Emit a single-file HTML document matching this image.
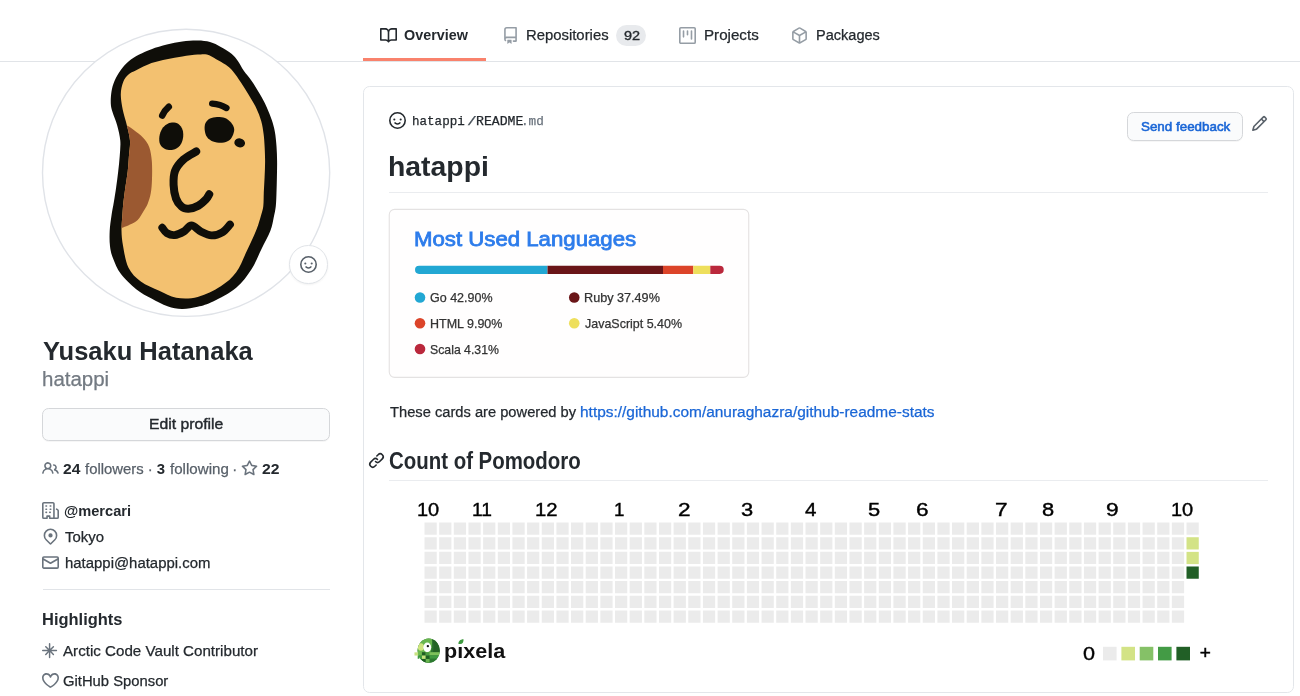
<!DOCTYPE html>
<html lang="en">
<head>
<meta charset="utf-8">
<title>hatappi (Yusaku Hatanaka)</title>
<style>
html,body{margin:0;padding:0}
body{width:1300px;height:696px;position:relative;overflow:hidden;background:#fff;font-family:"Liberation Sans",sans-serif;color:#24292e;-webkit-font-smoothing:antialiased}
.t{position:absolute;white-space:nowrap;margin:0;padding:0;font-weight:normal;text-decoration:none;color:#24292e;transform-origin:0 50%;display:block}
.i{position:absolute;display:block;overflow:visible}
#page{position:absolute;left:0;top:0;width:1300px;height:696px;will-change:transform}
.b{position:absolute;box-sizing:border-box}
#navline{left:0;top:60.5px;width:1300px;height:1.2px;background:#e1e4e8}
#tabsel{left:363.1px;top:58.3px;width:122.7px;height:2.9px;background:#f9826c}
#counter{left:616.4px;top:25.4px;width:30px;height:20.8px;border-radius:11px;background:#e8eaed}
#readme{left:363.2px;top:86.4px;width:930.5px;height:607px;border:1.4px solid #e3e6ea;border-radius:6.6px}
#fb{left:1127.3px;top:112.3px;width:116.2px;height:28.6px;border:1.1px solid #d5d7da;border-radius:6.6px;background:#fafbfc;box-shadow:0 1px 0 rgba(27,31,35,.04)}
#h1line{left:389.2px;top:191.6px;width:878.8px;height:1.1px;background:#eaecef}
#h2line{left:389.2px;top:480.4px;width:878.8px;height:1.1px;background:#eaecef}
#edit{left:42.3px;top:407.8px;width:287.9px;height:32.9px;border:1.1px solid #d5d7da;border-radius:6.6px;background:#fafbfc;box-shadow:0 1px 0 rgba(27,31,35,.04)}
#sideline{left:42.5px;top:588.7px;width:287.5px;height:1.1px;background:#e1e4e8}
#avatar{left:30px;top:20px;width:320px;height:320px}
#emoji{left:289.3px;top:245.3px;width:38.6px;height:38.6px;border-radius:50%;background:#fff;border:1.1px solid #e1e4e8;box-shadow:0 1px 2px rgba(27,31,35,.06)}
#card{left:385px;top:205px;width:370px;height:180px}
#grid{left:410px;top:518px;width:800px;height:150px}
#logo{left:405px;top:630px;width:110px;height:40px}
</style>
</head>
<body>
<div id="page">
<nav>
<div class="b" id="navline"></div>
<div class="b" id="tabsel"></div>
<div class="b" id="counter"></div>
<svg class="i" style="left:379.5px;top:26.52px;width:17px;height:17px;fill:#24292e" viewBox="0 0 16 16"><path fill-rule="evenodd" d="M0 1.75A.75.75 0 01.75 1h4.253c1.227 0 2.317.59 3 1.501A3.744 3.744 0 0111.006 1h4.245a.75.75 0 01.75.75v10.5a.75.75 0 01-.75.75h-4.507a2.25 2.25 0 00-1.591.659l-.622.621a.75.75 0 01-1.06 0l-.622-.621A2.25 2.25 0 005.258 13H.75a.75.75 0 01-.75-.75V1.75zm8.755 3a2.25 2.25 0 012.25-2.25H14.5v9h-3.757c-.71 0-1.4.201-1.992.572l.004-7.322zm-1.504 7.324l.004-5.073-.002-2.253A2.25 2.25 0 005.003 2.5H1.5v9h3.757a3.75 3.75 0 011.994.574z"/></svg>
<svg class="i" style="left:501.88px;top:26.88px;width:17px;height:17px;fill:#959da5" viewBox="0 0 16 16"><path fill-rule="evenodd" d="M2 2.5A2.5 2.5 0 014.5 0h8.75a.75.75 0 01.75.75v12.5a.75.75 0 01-.75.75h-2.5a.75.75 0 110-1.5h1.75v-2h-8a1 1 0 00-.714 1.7.75.75 0 01-1.072 1.05A2.495 2.495 0 012 11.5v-9zm10.5-1V9h-8c-.356 0-.694.074-1 .208V2.5a1 1 0 011-1h8zM5 12.25v3.25a.25.25 0 00.4.2l1.45-1.087a.25.25 0 01.3 0L8.6 15.7a.25.25 0 00.4-.2v-3.25a.25.25 0 00-.25-.25h-3.5a.25.25 0 00-.25.25z"/></svg>
<svg class="i" style="left:679px;top:26.5px;width:17px;height:17px;fill:#959da5" viewBox="0 0 16 16"><path fill-rule="evenodd" d="M1.75 0A1.75 1.75 0 000 1.75v12.5C0 15.216.784 16 1.75 16h12.5A1.75 1.75 0 0016 14.25V1.75A1.75 1.75 0 0014.25 0H1.75zM1.5 1.75a.25.25 0 01.25-.25h12.5a.25.25 0 01.25.25v12.5a.25.25 0 01-.25.25H1.75a.25.25 0 01-.25-.25V1.75zM11.75 3a.75.75 0 00-.75.75v7.5a.75.75 0 001.5 0v-7.5a.75.75 0 00-.75-.75zm-8.25.75a.75.75 0 011.5 0v5.5a.75.75 0 01-1.5 0v-5.5zM8 3a.75.75 0 00-.75.75v3.5a.75.75 0 001.5 0v-3.5A.75.75 0 008 3z"/></svg>
<svg class="i" style="left:791.25px;top:26.5px;width:17px;height:17px;fill:#959da5" viewBox="0 0 16 16"><path fill-rule="evenodd" d="M8.878.392a1.75 1.75 0 00-1.756 0l-5.25 3.045A1.75 1.75 0 001 4.951v6.098c0 .624.332 1.2.872 1.514l5.25 3.045a1.75 1.75 0 001.756 0l5.25-3.045c.54-.313.872-.89.872-1.514V4.951c0-.624-.332-1.2-.872-1.514L8.878.392zM7.875 1.69a.25.25 0 01.25 0l4.63 2.685L8 7.133 3.245 4.375l4.63-2.685zM2.5 5.677v5.372c0 .09.047.171.125.216l4.625 2.683V8.432L2.5 5.677zm6.25 8.271l4.625-2.683a.25.25 0 00.125-.216V5.677L8.75 8.432v5.516z"/></svg>
<span class="t" style="left:404.05px;top:26.02px;font-size:14.9px;line-height:18px;font-weight:bold;transform:scaleX(0.9643)">Overview</span>
<span class="t" style="left:525.84px;top:26.02px;font-size:14.9px;line-height:18px;transform:scaleX(0.9977);-webkit-text-stroke:0.25px">Repositories</span>
<span class="t" style="left:623.88px;top:28.02px;font-size:12.75px;line-height:16px;transform:scaleX(1.1354);-webkit-text-stroke:0.35px">92</span>
<span class="t" style="left:704.22px;top:26.02px;font-size:14.9px;line-height:18px;transform:scaleX(1.0174);-webkit-text-stroke:0.25px">Projects</span>
<span class="t" style="left:816.26px;top:26.02px;font-size:14.9px;line-height:18px;transform:scaleX(0.9764);-webkit-text-stroke:0.25px">Packages</span>
</nav>
<aside>
<svg class="i" id="avatar" viewBox="30 20 320 320">
<circle cx="186.1" cy="172.8" r="143.6" fill="#fff" stroke="#e0e3e8" stroke-width="1.4"/>
<path d="M110.8 103.8C110.63 100.38 110.87 95.33 111.5 91.5C112.13 87.67 113.05 84.38 114.6 80.8C116.15 77.22 118.48 73.22 120.8 70C123.12 66.78 125.43 64.07 128.5 61.5C131.57 58.93 135.37 56.65 139.2 54.6C143.03 52.55 146.88 50.87 151.5 49.2C156.12 47.53 161.77 45.88 166.9 44.6C172.03 43.32 177.17 42.18 182.3 41.5C187.43 40.82 193.08 40.42 197.7 40.5C202.32 40.58 206.15 40.93 210 42C213.85 43.07 217.22 44.93 220.8 46.9C224.38 48.87 228.68 51.48 231.5 53.8C234.32 56.12 235.65 57.97 237.7 60.8C239.75 63.63 241.5 67.47 243.8 70.8C246.1 74.13 248.93 77.08 251.5 80.8C254.07 84.52 256.68 88.75 259.2 93.1C261.72 97.45 264.5 102.42 266.6 106.9C268.7 111.38 270.42 115.82 271.8 120C273.18 124.18 274.12 127.63 274.9 132C275.68 136.37 276.13 141.28 276.5 146.2C276.87 151.12 277.03 156.38 277.1 161.5C277.17 166.62 277 171.77 276.9 176.9C276.8 182.03 276.68 187.42 276.5 192.3C276.32 197.18 276.25 202.08 275.8 206.2C275.35 210.32 274.7 212.9 273.8 217C272.9 221.1 272.47 225.43 270.4 230.8C268.33 236.17 264.55 242.8 261.4 249.2C258.25 255.6 255.7 262.78 251.5 269.2C247.3 275.62 242.6 282.32 236.2 287.7C229.8 293.08 219.52 298.32 213.1 301.5C206.68 304.68 202.88 305.55 197.7 306.8C192.52 308.05 187.03 309.1 182 309C176.97 308.9 172.58 307.95 167.5 306.2C162.42 304.45 156.72 301.33 151.5 298.5C146.28 295.67 141.32 293.32 136.2 289.2C131.08 285.08 124.65 278.92 120.8 273.8C116.95 268.68 114.9 263.1 113.1 258.5C111.3 253.9 110.57 250.82 110 246.2C109.43 241.58 109.45 235.93 109.7 230.8C109.95 225.67 110.82 220.15 111.5 215.4C112.18 210.65 113.02 207.05 113.8 202.3C114.58 197.55 115.47 192.03 116.2 186.9C116.93 181.77 117.62 176.62 118.2 171.5C118.78 166.38 119.35 161.32 119.7 156.2C120.05 151.08 120.72 145.93 120.3 140.8C119.88 135.67 118.5 130.2 117.2 125.4C115.9 120.6 113.57 115.6 112.5 112C111.43 108.4 110.97 107.22 110.8 103.8Z" fill="#0f0e09"/>
<path d="M120.8 94.6C120.85 89.98 121.82 85.63 123.1 82.3C124.38 78.97 126.32 76.6 128.5 74.6C130.68 72.6 132.37 72.22 136.2 70.3C140.03 68.38 146.38 64.95 151.5 63.1C156.62 61.25 161.77 60.3 166.9 59.2C172.03 58.1 177.17 57.27 182.3 56.5C187.43 55.73 193.6 54.92 197.7 54.6C201.8 54.28 203.82 53.83 206.9 54.6C209.98 55.37 213.12 57.53 216.2 59.2C219.28 60.87 222.58 62.55 225.4 64.6C228.22 66.65 230.53 68.55 233.1 71.5C235.67 74.45 238.23 78.45 240.8 82.3C243.37 86.15 245.93 90.32 248.5 94.6C251.07 98.88 254.08 103.6 256.2 108C258.32 112.4 259.97 116.67 261.2 121C262.43 125.33 263.03 129.8 263.6 134C264.17 138.2 264.35 141.62 264.6 146.2C264.85 150.78 265.1 156.38 265.1 161.5C265.1 166.62 264.82 171.77 264.6 176.9C264.38 182.03 264.02 187.42 263.8 192.3C263.58 197.18 263.77 202.35 263.3 206.2C262.83 210.05 262.12 211.57 261 215.4C259.88 219.23 258.95 223.3 256.6 229.2C254.25 235.1 250.3 243.62 246.9 250.8C243.5 257.98 240.55 266.4 236.2 272.3C231.85 278.2 227.22 282.1 220.8 286.2C214.38 290.3 205.13 294.98 197.7 296.9C190.27 298.82 182.62 298.72 176.2 297.7C169.78 296.68 165.1 293.5 159.2 290.8C153.3 288.1 145.92 285.35 140.8 281.5C135.68 277.65 131.45 273.58 128.5 267.7C125.55 261.82 124.27 252.35 123.1 246.2C121.93 240.05 121.63 235.8 121.5 230.8C121.37 225.8 121.98 220.95 122.3 216.2C122.62 211.45 122.88 207.18 123.4 202.3C123.92 197.42 124.68 192.03 125.4 186.9C126.12 181.77 127.12 176.62 127.7 171.5C128.28 166.38 128.52 161.32 128.9 156.2C129.28 151.08 130.33 145.93 130 140.8C129.67 135.67 128.1 130.53 126.9 125.4C125.7 120.27 123.82 115.13 122.8 110C121.78 104.87 120.75 99.22 120.8 94.6Z" fill="#f3c170"/>
<clipPath id="beanclip"><path d="M120.8 94.6C120.85 89.98 121.82 85.63 123.1 82.3C124.38 78.97 126.32 76.6 128.5 74.6C130.68 72.6 132.37 72.22 136.2 70.3C140.03 68.38 146.38 64.95 151.5 63.1C156.62 61.25 161.77 60.3 166.9 59.2C172.03 58.1 177.17 57.27 182.3 56.5C187.43 55.73 193.6 54.92 197.7 54.6C201.8 54.28 203.82 53.83 206.9 54.6C209.98 55.37 213.12 57.53 216.2 59.2C219.28 60.87 222.58 62.55 225.4 64.6C228.22 66.65 230.53 68.55 233.1 71.5C235.67 74.45 238.23 78.45 240.8 82.3C243.37 86.15 245.93 90.32 248.5 94.6C251.07 98.88 254.08 103.6 256.2 108C258.32 112.4 259.97 116.67 261.2 121C262.43 125.33 263.03 129.8 263.6 134C264.17 138.2 264.35 141.62 264.6 146.2C264.85 150.78 265.1 156.38 265.1 161.5C265.1 166.62 264.82 171.77 264.6 176.9C264.38 182.03 264.02 187.42 263.8 192.3C263.58 197.18 263.77 202.35 263.3 206.2C262.83 210.05 262.12 211.57 261 215.4C259.88 219.23 258.95 223.3 256.6 229.2C254.25 235.1 250.3 243.62 246.9 250.8C243.5 257.98 240.55 266.4 236.2 272.3C231.85 278.2 227.22 282.1 220.8 286.2C214.38 290.3 205.13 294.98 197.7 296.9C190.27 298.82 182.62 298.72 176.2 297.7C169.78 296.68 165.1 293.5 159.2 290.8C153.3 288.1 145.92 285.35 140.8 281.5C135.68 277.65 131.45 273.58 128.5 267.7C125.55 261.82 124.27 252.35 123.1 246.2C121.93 240.05 121.63 235.8 121.5 230.8C121.37 225.8 121.98 220.95 122.3 216.2C122.62 211.45 122.88 207.18 123.4 202.3C123.92 197.42 124.68 192.03 125.4 186.9C126.12 181.77 127.12 176.62 127.7 171.5C128.28 166.38 128.52 161.32 128.9 156.2C129.28 151.08 130.33 145.93 130 140.8C129.67 135.67 128.1 130.53 126.9 125.4C125.7 120.27 123.82 115.13 122.8 110C121.78 104.87 120.75 99.22 120.8 94.6Z"/></clipPath>
<path d="M126.9 125.4C128.7 126.07 131.1 127.95 133.8 130C136.5 132.05 140.53 134.88 143.1 137.7C145.67 140.52 147.75 143.05 149.2 146.9C150.65 150.75 151.33 155.42 151.8 160.8C152.27 166.18 152.17 173.82 152 179.2C151.83 184.58 151.52 189 150.8 193.1C150.08 197.2 148.87 200.85 147.7 203.8C146.53 206.75 145.47 208.1 143.8 210.8C142.13 213.5 140 217.7 137.7 220C135.4 222.3 132.43 223.37 130 224.6C127.57 225.83 125.1 227 123.1 227.4C121.1 227.8 118.85 228.87 118 227C117.15 225.13 117.67 220.32 118 216.2C118.33 212.08 119.33 207.18 120 202.3C120.67 197.42 121.33 192.03 122 186.9C122.67 181.77 123.5 176.62 124 171.5C124.5 166.38 124.67 161.32 125 156.2C125.33 151.08 126.33 145.83 126 140.8C125.67 135.77 122.85 128.57 123 126C123.15 123.43 125.1 124.73 126.9 125.4Z" fill="#9b5931" clip-path="url(#beanclip)"/>
<g fill="none" stroke="#0f0e09" stroke-linecap="round" stroke-linejoin="round">
<path d="M162.2 115.6Q164.4 110.6 168.8 106.8" stroke-width="6.5"/>
<path d="M212.2 103.6Q220.5 104.2 226.4 108" stroke-width="6.4"/>
<path d="M196.2 151.5C194.08 152.83 187.03 156.25 183.5 159.5C179.97 162.75 176.65 166.75 175 171C173.35 175.25 173.43 180.42 173.6 185C173.77 189.58 174.68 194.92 176 198.5C177.32 202.08 179.42 204.78 181.5 206.5C183.58 208.22 185.67 208.95 188.5 208.8C191.33 208.65 195.62 207.13 198.5 205.6C201.38 204.07 204.02 201.48 205.8 199.6C207.58 197.72 208.63 195.18 209.2 194.3" stroke-width="8"/>
<path d="M162.3 227.7C163.07 228.6 164.85 231.87 166.9 233.1C168.95 234.33 171.78 235.37 174.6 235.1C177.42 234.83 180.98 233.12 183.8 231.5C186.62 229.88 188.67 225.4 191.5 225.4C194.33 225.4 197.47 229.83 200.8 231.5C204.13 233.17 207.92 235.27 211.5 235.4C215.08 235.53 219.22 234.1 222.3 232.3C225.38 230.5 228.72 225.88 230 224.6" stroke-width="7.8"/>
</g>
<g fill="#0f0e09">
<path d="M172 122.6C174 122.52 176.73 122.77 178.5 124C180.27 125.23 181.85 127.67 182.6 130C183.35 132.33 183.43 135.42 183 138C182.57 140.58 181.67 143.53 180 145.5C178.33 147.47 175.5 149.22 173 149.8C170.5 150.38 167.17 149.97 165 149C162.83 148.03 160.93 146.08 160 144C159.07 141.92 159.07 139 159.4 136.5C159.73 134 160.82 131 162 129C163.18 127 164.83 125.57 166.5 124.5C168.17 123.43 170 122.68 172 122.6Z"/>
<path d="M217 116.9C219.5 116.82 222.67 117.07 225 118C227.33 118.93 229.47 120.67 231 122.5C232.53 124.33 233.95 126.75 234.2 129C234.45 131.25 233.37 134.08 232.5 136C231.63 137.92 230.75 139.37 229 140.5C227.25 141.63 224.67 142.63 222 142.8C219.33 142.97 215.5 142.47 213 141.5C210.5 140.53 208.38 138.92 207 137C205.62 135.08 204.95 132.33 204.7 130C204.45 127.67 204.62 124.92 205.5 123C206.38 121.08 208.08 119.52 210 118.5C211.92 117.48 214.5 116.98 217 116.9Z"/>
<ellipse cx="239.7" cy="142.9" rx="5.4" ry="4.5" transform="rotate(10 239.7 142.9)"/>
</g>
</svg>
<div class="b" id="emoji"></div>
<div class="b" id="edit"></div>
<div class="b" id="sideline"></div>
<svg class="i" style="left:42.07px;top:460.23px;width:17px;height:17px;fill:#6a737d" viewBox="0 0 16 16"><path fill-rule="evenodd" d="M5.5 3.5a2 2 0 100 4 2 2 0 000-4zM2 5.5a3.5 3.5 0 115.898 2.549 5.507 5.507 0 013.034 4.084.75.75 0 11-1.482.235 4.001 4.001 0 00-7.9 0 .75.75 0 01-1.482-.236A5.507 5.507 0 013.102 8.05 3.49 3.49 0 012 5.5zM11 4a.75.75 0 100 1.5 1.5 1.5 0 01.666 2.844.75.75 0 00-.416.672v.352a.75.75 0 00.574.73c1.2.289 2.162 1.2 2.522 2.372a.75.75 0 101.434-.44 5.01 5.01 0 00-2.56-3.012A3 3 0 0011 4z"/></svg>
<svg class="i" style="left:240.7px;top:460.21px;width:17px;height:17px;fill:#6a737d" viewBox="0 0 16 16"><path fill-rule="evenodd" d="M8 .25a.75.75 0 01.673.418l1.882 3.815 4.21.612a.75.75 0 01.416 1.279l-3.046 2.97.719 4.192a.75.75 0 01-1.088.791L8 12.347l-3.766 1.98a.75.75 0 01-1.088-.79l.72-4.194L.818 6.374a.75.75 0 01.416-1.28l4.21-.611L7.327.668A.75.75 0 018 .25zm0 2.445L6.615 5.5a.75.75 0 01-.564.41l-3.097.45 2.24 2.184a.75.75 0 01.216.664l-.528 3.084 2.769-1.456a.75.75 0 01.698 0l2.77 1.456-.53-3.084a.75.75 0 01.216-.664l2.24-2.183-3.096-.45a.75.75 0 01-.564-.41L8 2.694v.001z"/></svg>
<svg class="i" style="left:42.12px;top:502.12px;width:17px;height:17px;fill:#6a737d" viewBox="0 0 16 16"><path fill-rule="evenodd" d="M1.5 14.25c0 .138.112.25.25.25H4v-1.25a.75.75 0 01.75-.75h2.5a.75.75 0 01.75.75v1.25h2.25a.25.25 0 00.25-.25V1.75a.25.25 0 00-.25-.25h-8.5a.25.25 0 00-.25.25v12.5zM1.75 16A1.75 1.75 0 010 14.25V1.75C0 .784.784 0 1.75 0h8.5C11.216 0 12 .784 12 1.75v12.5c0 .085-.006.168-.018.25h2.268a.25.25 0 00.25-.25V8.285a.25.25 0 00-.111-.208l-1.055-.703a.75.75 0 11.832-1.248l1.055.703c.487.325.779.871.779 1.456v5.965A1.75 1.75 0 0114.25 16h-3.5a.75.75 0 01-.197-.026c-.099.017-.2.026-.303.026h-3a.75.75 0 01-.75-.75V14h-1v1.25a.75.75 0 01-.75.75h-3zM3 3.75A.75.75 0 013.75 3h.5a.75.75 0 010 1.5h-.5A.75.75 0 013 3.75zM3.75 6a.75.75 0 000 1.5h.5a.75.75 0 000-1.5h-.5zM3 9.75A.75.75 0 013.75 9h.5a.75.75 0 010 1.5h-.5A.75.75 0 013 9.75zM7.25 9a.75.75 0 000 1.5h.5a.75.75 0 000-1.5h-.5zM7 6.75A.75.75 0 017.75 6h.5a.75.75 0 010 1.5h-.5A.75.75 0 017 6.75zM7.75 3a.75.75 0 000 1.5h.5a.75.75 0 000-1.5h-.5z"/></svg>
<svg class="i" style="left:42.12px;top:528.34px;width:17px;height:17px;fill:#6a737d" viewBox="0 0 16 16"><path fill-rule="evenodd" d="M11.536 3.464a5 5 0 010 7.072L8 14.07l-3.536-3.535a5 5 0 117.072-7.072v.001zm1.06 8.132a6.5 6.5 0 10-9.192 0l3.535 3.536a1.5 1.5 0 002.122 0l3.535-3.536zM8 9a2 2 0 100-4 2 2 0 000 4z"/></svg>
<svg class="i" style="left:42.13px;top:553.75px;width:17px;height:17px;fill:#6a737d" viewBox="0 0 16 16"><path fill-rule="evenodd" d="M1.75 2A1.75 1.75 0 000 3.75v.736a.75.75 0 000 .027v7.737C0 13.216.784 14 1.75 14h12.5A1.75 1.75 0 0016 12.25v-8.5A1.75 1.75 0 0014.25 2H1.75zM14.5 4.07v-.32a.25.25 0 00-.25-.25H1.75a.25.25 0 00-.25.25v.32L8 7.88l6.5-3.81zm-13 1.74v6.441c0 .138.112.25.25.25h12.5a.25.25 0 00.25-.25V5.809L8.38 9.397a.75.75 0 01-.76 0L1.5 5.809z"/></svg>
<svg class="i" style="left:42.4px;top:643.1px;width:15.68px;height:15.68px;fill:#6a737d" viewBox="0 0 16 16"><path fill-rule="evenodd" d="M8.5.75a.75.75 0 00-1.5 0v5.19L4.391 3.33a.75.75 0 10-1.06 1.061L5.939 7H.75a.75.75 0 000 1.5h5.19l-2.61 2.609a.75.75 0 101.061 1.06L7 9.561v5.189a.75.75 0 001.5 0V9.56l2.609 2.61a.75.75 0 101.06-1.061L9.561 8.5h5.189a.75.75 0 000-1.5H9.56l2.61-2.609a.75.75 0 00-1.061-1.06L8.5 5.939V.75z"/></svg>
<svg class="i" style="left:42.12px;top:672.13px;width:17px;height:17px;fill:#6a737d" viewBox="0 0 16 16"><path fill-rule="evenodd" d="M4.25 2.5c-1.336 0-2.75 1.164-2.75 3 0 2.15 1.58 4.144 3.365 5.682A20.565 20.565 0 008 13.393a20.561 20.561 0 003.135-2.211C12.92 9.644 14.5 7.65 14.5 5.5c0-1.836-1.414-3-2.75-3-1.373 0-2.609.986-3.029 2.456a.75.75 0 01-1.442 0C6.859 3.486 5.623 2.5 4.25 2.5zM8 14.25l-.345.666-.002-.001-.006-.003-.018-.01a7.643 7.643 0 01-.31-.17 22.075 22.075 0 01-3.434-2.414C2.045 10.731 0 8.35 0 5.5 0 2.836 2.086 1 4.25 1 5.797 1 7.153 1.802 8 3.02 8.847 1.802 10.203 1 11.75 1 13.914 1 16 2.836 16 5.5c0 2.85-2.045 5.231-3.885 6.818a22.08 22.08 0 01-3.744 2.584l-.018.01-.006.003h-.002L8 14.25zm0 0l.345.666a.752.752 0 01-.69 0L8 14.25z"/></svg>
<svg class="i" style="left:300.1px;top:256.1px;width:17px;height:17px;fill:#586069" viewBox="0 0 16 16"><path fill-rule="evenodd" d="M1.5 8a6.5 6.5 0 1113 0 6.5 6.5 0 01-13 0zM8 0a8 8 0 100 16A8 8 0 008 0zM5 8a1 1 0 100-2 1 1 0 000 2zm7-1a1 1 0 11-2 0 1 1 0 012 0zM5.32 9.636a.75.75 0 011.038.175l.007.009c.103.118.22.222.35.31.264.178.683.37 1.285.37.602 0 1.02-.192 1.285-.371.13-.088.247-.192.35-.31l.007-.008a.75.75 0 111.222.87l-.614-.431c.614.43.614.431.613.431v.001l-.001.002-.002.003-.005.007-.014.019a1.984 1.984 0 01-.184.213c-.16.166-.338.316-.53.445-.63.418-1.37.638-2.127.629-.946 0-1.652-.308-2.126-.63a3.32 3.32 0 01-.715-.657l-.014-.02-.005-.006-.002-.003v-.002h-.001l.613-.432-.614.43a.75.75 0 01.183-1.044h.001z"/></svg>
<span class="t" style="left:42.6px;top:336.02px;font-size:25.5px;line-height:31px;font-weight:bold;transform:scaleX(0.9998)">Yusaku Hatanaka</span>
<span class="t" style="left:41.72px;top:367.02px;font-size:20px;line-height:24px;color:#737a82;transform:scaleX(1.0230);-webkit-text-stroke:0.25px">hatappi</span>
<span class="t" style="left:148.77px;top:415.02px;font-size:14.9px;line-height:18px;transform:scaleX(1.0564);-webkit-text-stroke:0.4px">Edit profile</span>
<span class="t" style="left:62.51px;top:460.02px;font-size:14.9px;line-height:18px;font-weight:bold;transform:scaleX(1.0492)">24</span>
<span class="t" style="left:85.4px;top:460.02px;font-size:14.9px;line-height:18px;color:#586069;transform:scaleX(0.9978);-webkit-text-stroke:0.25px">followers</span>
<span class="t" style="left:147.77px;top:460.02px;font-size:14.9px;line-height:18px;color:#586069;-webkit-text-stroke:0.25px">·</span>
<span class="t" style="left:156.77px;top:460.02px;font-size:14.9px;line-height:18px;font-weight:bold">3</span>
<span class="t" style="left:170px;top:460.02px;font-size:14.9px;line-height:18px;color:#586069;transform:scaleX(1.0150);-webkit-text-stroke:0.25px">following</span>
<span class="t" style="left:232.17px;top:460.02px;font-size:14.9px;line-height:18px;color:#586069;-webkit-text-stroke:0.25px">·</span>
<span class="t" style="left:261.51px;top:460.02px;font-size:14.9px;line-height:18px;font-weight:bold;transform:scaleX(1.0549)">22</span>
<span class="t" style="left:64.32px;top:502.02px;font-size:14.9px;line-height:18px;font-weight:bold;transform:scaleX(0.9806)">@mercari</span>
<span class="t" style="left:65.37px;top:528.02px;font-size:14.9px;line-height:18px;transform:scaleX(1.0017);-webkit-text-stroke:0.25px">Tokyo</span>
<span class="t" style="left:64.57px;top:554.02px;font-size:14.9px;line-height:18px;transform:scaleX(1.0019);-webkit-text-stroke:0.25px">hatappi@hatappi.com</span>
<span class="t" style="left:41.97px;top:609.02px;font-size:17px;line-height:21px;font-weight:bold;transform:scaleX(0.9681)">Highlights</span>
<span class="t" style="left:63.2px;top:642.02px;font-size:14.9px;line-height:18px;transform:scaleX(1.0171);-webkit-text-stroke:0.25px">Arctic Code Vault Contributor</span>
<span class="t" style="left:63.11px;top:672.02px;font-size:14.9px;line-height:18px;transform:scaleX(0.9939);-webkit-text-stroke:0.25px">GitHub Sponsor</span>
</aside>
<main>
<div class="b" id="readme"></div>
<div class="b" id="fb"></div>
<div class="b" id="h1line"></div>
<div class="b" id="h2line"></div>
<svg class="i" id="card" viewBox="385 205 370 180">
<rect x="389.25" y="209.4" width="359.5" height="168" rx="5.4" fill="#fffefe" stroke="#e4e2e2" stroke-width="1.1"/>
<defs><clipPath id="barclip"><rect x="415" y="265.7" width="308.75" height="8.2" rx="4.1"/></clipPath></defs>
<g clip-path="url(#barclip)">
<rect x="415" y="265" width="132.5" height="10" fill="#22a7d3"/>
<rect x="547.5" y="265" width="115.5" height="10" fill="#6a1518"/>
<rect x="663" y="265" width="30.3" height="10" fill="#dc4429"/>
<rect x="693.3" y="265" width="17" height="10" fill="#eedf5c"/>
<rect x="710.3" y="265" width="14" height="10" fill="#ba283c"/>
</g>
<circle cx="420" cy="297.5" r="5.3" fill="#22a7d3"/>
<circle cx="420" cy="323.25" r="5.3" fill="#dc4429"/>
<circle cx="420" cy="349" r="5.3" fill="#ba283c"/>
<circle cx="574.25" cy="297.5" r="5.3" fill="#6a1518"/>
<circle cx="574.25" cy="323.25" r="5.3" fill="#eedf5c"/>
</svg>
<svg class="i" id="grid" viewBox="410 518 800 150" shape-rendering="auto">
<path fill="#ebebeb" d="M424.50 522.60h12.25v12.25h-12.25zM424.50 537.23h12.25v12.25h-12.25zM424.50 551.86h12.25v12.25h-12.25zM424.50 566.49h12.25v12.25h-12.25zM424.50 581.12h12.25v12.25h-12.25zM424.50 595.75h12.25v12.25h-12.25zM424.50 610.38h12.25v12.25h-12.25zM439.15 522.60h12.25v12.25h-12.25zM439.15 537.23h12.25v12.25h-12.25zM439.15 551.86h12.25v12.25h-12.25zM439.15 566.49h12.25v12.25h-12.25zM439.15 581.12h12.25v12.25h-12.25zM439.15 595.75h12.25v12.25h-12.25zM439.15 610.38h12.25v12.25h-12.25zM453.81 522.60h12.25v12.25h-12.25zM453.81 537.23h12.25v12.25h-12.25zM453.81 551.86h12.25v12.25h-12.25zM453.81 566.49h12.25v12.25h-12.25zM453.81 581.12h12.25v12.25h-12.25zM453.81 595.75h12.25v12.25h-12.25zM453.81 610.38h12.25v12.25h-12.25zM468.46 522.60h12.25v12.25h-12.25zM468.46 537.23h12.25v12.25h-12.25zM468.46 551.86h12.25v12.25h-12.25zM468.46 566.49h12.25v12.25h-12.25zM468.46 581.12h12.25v12.25h-12.25zM468.46 595.75h12.25v12.25h-12.25zM468.46 610.38h12.25v12.25h-12.25zM483.12 522.60h12.25v12.25h-12.25zM483.12 537.23h12.25v12.25h-12.25zM483.12 551.86h12.25v12.25h-12.25zM483.12 566.49h12.25v12.25h-12.25zM483.12 581.12h12.25v12.25h-12.25zM483.12 595.75h12.25v12.25h-12.25zM483.12 610.38h12.25v12.25h-12.25zM497.77 522.60h12.25v12.25h-12.25zM497.77 537.23h12.25v12.25h-12.25zM497.77 551.86h12.25v12.25h-12.25zM497.77 566.49h12.25v12.25h-12.25zM497.77 581.12h12.25v12.25h-12.25zM497.77 595.75h12.25v12.25h-12.25zM497.77 610.38h12.25v12.25h-12.25zM512.42 522.60h12.25v12.25h-12.25zM512.42 537.23h12.25v12.25h-12.25zM512.42 551.86h12.25v12.25h-12.25zM512.42 566.49h12.25v12.25h-12.25zM512.42 581.12h12.25v12.25h-12.25zM512.42 595.75h12.25v12.25h-12.25zM512.42 610.38h12.25v12.25h-12.25zM527.08 522.60h12.25v12.25h-12.25zM527.08 537.23h12.25v12.25h-12.25zM527.08 551.86h12.25v12.25h-12.25zM527.08 566.49h12.25v12.25h-12.25zM527.08 581.12h12.25v12.25h-12.25zM527.08 595.75h12.25v12.25h-12.25zM527.08 610.38h12.25v12.25h-12.25zM541.73 522.60h12.25v12.25h-12.25zM541.73 537.23h12.25v12.25h-12.25zM541.73 551.86h12.25v12.25h-12.25zM541.73 566.49h12.25v12.25h-12.25zM541.73 581.12h12.25v12.25h-12.25zM541.73 595.75h12.25v12.25h-12.25zM541.73 610.38h12.25v12.25h-12.25zM556.39 522.60h12.25v12.25h-12.25zM556.39 537.23h12.25v12.25h-12.25zM556.39 551.86h12.25v12.25h-12.25zM556.39 566.49h12.25v12.25h-12.25zM556.39 581.12h12.25v12.25h-12.25zM556.39 595.75h12.25v12.25h-12.25zM556.39 610.38h12.25v12.25h-12.25zM571.04 522.60h12.25v12.25h-12.25zM571.04 537.23h12.25v12.25h-12.25zM571.04 551.86h12.25v12.25h-12.25zM571.04 566.49h12.25v12.25h-12.25zM571.04 581.12h12.25v12.25h-12.25zM571.04 595.75h12.25v12.25h-12.25zM571.04 610.38h12.25v12.25h-12.25zM585.69 522.60h12.25v12.25h-12.25zM585.69 537.23h12.25v12.25h-12.25zM585.69 551.86h12.25v12.25h-12.25zM585.69 566.49h12.25v12.25h-12.25zM585.69 581.12h12.25v12.25h-12.25zM585.69 595.75h12.25v12.25h-12.25zM585.69 610.38h12.25v12.25h-12.25zM600.35 522.60h12.25v12.25h-12.25zM600.35 537.23h12.25v12.25h-12.25zM600.35 551.86h12.25v12.25h-12.25zM600.35 566.49h12.25v12.25h-12.25zM600.35 581.12h12.25v12.25h-12.25zM600.35 595.75h12.25v12.25h-12.25zM600.35 610.38h12.25v12.25h-12.25zM615.00 522.60h12.25v12.25h-12.25zM615.00 537.23h12.25v12.25h-12.25zM615.00 551.86h12.25v12.25h-12.25zM615.00 566.49h12.25v12.25h-12.25zM615.00 581.12h12.25v12.25h-12.25zM615.00 595.75h12.25v12.25h-12.25zM615.00 610.38h12.25v12.25h-12.25zM629.66 522.60h12.25v12.25h-12.25zM629.66 537.23h12.25v12.25h-12.25zM629.66 551.86h12.25v12.25h-12.25zM629.66 566.49h12.25v12.25h-12.25zM629.66 581.12h12.25v12.25h-12.25zM629.66 595.75h12.25v12.25h-12.25zM629.66 610.38h12.25v12.25h-12.25zM644.31 522.60h12.25v12.25h-12.25zM644.31 537.23h12.25v12.25h-12.25zM644.31 551.86h12.25v12.25h-12.25zM644.31 566.49h12.25v12.25h-12.25zM644.31 581.12h12.25v12.25h-12.25zM644.31 595.75h12.25v12.25h-12.25zM644.31 610.38h12.25v12.25h-12.25zM658.96 522.60h12.25v12.25h-12.25zM658.96 537.23h12.25v12.25h-12.25zM658.96 551.86h12.25v12.25h-12.25zM658.96 566.49h12.25v12.25h-12.25zM658.96 581.12h12.25v12.25h-12.25zM658.96 595.75h12.25v12.25h-12.25zM658.96 610.38h12.25v12.25h-12.25zM673.62 522.60h12.25v12.25h-12.25zM673.62 537.23h12.25v12.25h-12.25zM673.62 551.86h12.25v12.25h-12.25zM673.62 566.49h12.25v12.25h-12.25zM673.62 581.12h12.25v12.25h-12.25zM673.62 595.75h12.25v12.25h-12.25zM673.62 610.38h12.25v12.25h-12.25zM688.27 522.60h12.25v12.25h-12.25zM688.27 537.23h12.25v12.25h-12.25zM688.27 551.86h12.25v12.25h-12.25zM688.27 566.49h12.25v12.25h-12.25zM688.27 581.12h12.25v12.25h-12.25zM688.27 595.75h12.25v12.25h-12.25zM688.27 610.38h12.25v12.25h-12.25zM702.93 522.60h12.25v12.25h-12.25zM702.93 537.23h12.25v12.25h-12.25zM702.93 551.86h12.25v12.25h-12.25zM702.93 566.49h12.25v12.25h-12.25zM702.93 581.12h12.25v12.25h-12.25zM702.93 595.75h12.25v12.25h-12.25zM702.93 610.38h12.25v12.25h-12.25zM717.58 522.60h12.25v12.25h-12.25zM717.58 537.23h12.25v12.25h-12.25zM717.58 551.86h12.25v12.25h-12.25zM717.58 566.49h12.25v12.25h-12.25zM717.58 581.12h12.25v12.25h-12.25zM717.58 595.75h12.25v12.25h-12.25zM717.58 610.38h12.25v12.25h-12.25zM732.23 522.60h12.25v12.25h-12.25zM732.23 537.23h12.25v12.25h-12.25zM732.23 551.86h12.25v12.25h-12.25zM732.23 566.49h12.25v12.25h-12.25zM732.23 581.12h12.25v12.25h-12.25zM732.23 595.75h12.25v12.25h-12.25zM732.23 610.38h12.25v12.25h-12.25zM746.89 522.60h12.25v12.25h-12.25zM746.89 537.23h12.25v12.25h-12.25zM746.89 551.86h12.25v12.25h-12.25zM746.89 566.49h12.25v12.25h-12.25zM746.89 581.12h12.25v12.25h-12.25zM746.89 595.75h12.25v12.25h-12.25zM746.89 610.38h12.25v12.25h-12.25zM761.54 522.60h12.25v12.25h-12.25zM761.54 537.23h12.25v12.25h-12.25zM761.54 551.86h12.25v12.25h-12.25zM761.54 566.49h12.25v12.25h-12.25zM761.54 581.12h12.25v12.25h-12.25zM761.54 595.75h12.25v12.25h-12.25zM761.54 610.38h12.25v12.25h-12.25zM776.20 522.60h12.25v12.25h-12.25zM776.20 537.23h12.25v12.25h-12.25zM776.20 551.86h12.25v12.25h-12.25zM776.20 566.49h12.25v12.25h-12.25zM776.20 581.12h12.25v12.25h-12.25zM776.20 595.75h12.25v12.25h-12.25zM776.20 610.38h12.25v12.25h-12.25zM790.85 522.60h12.25v12.25h-12.25zM790.85 537.23h12.25v12.25h-12.25zM790.85 551.86h12.25v12.25h-12.25zM790.85 566.49h12.25v12.25h-12.25zM790.85 581.12h12.25v12.25h-12.25zM790.85 595.75h12.25v12.25h-12.25zM790.85 610.38h12.25v12.25h-12.25zM805.50 522.60h12.25v12.25h-12.25zM805.50 537.23h12.25v12.25h-12.25zM805.50 551.86h12.25v12.25h-12.25zM805.50 566.49h12.25v12.25h-12.25zM805.50 581.12h12.25v12.25h-12.25zM805.50 595.75h12.25v12.25h-12.25zM805.50 610.38h12.25v12.25h-12.25zM820.16 522.60h12.25v12.25h-12.25zM820.16 537.23h12.25v12.25h-12.25zM820.16 551.86h12.25v12.25h-12.25zM820.16 566.49h12.25v12.25h-12.25zM820.16 581.12h12.25v12.25h-12.25zM820.16 595.75h12.25v12.25h-12.25zM820.16 610.38h12.25v12.25h-12.25zM834.81 522.60h12.25v12.25h-12.25zM834.81 537.23h12.25v12.25h-12.25zM834.81 551.86h12.25v12.25h-12.25zM834.81 566.49h12.25v12.25h-12.25zM834.81 581.12h12.25v12.25h-12.25zM834.81 595.75h12.25v12.25h-12.25zM834.81 610.38h12.25v12.25h-12.25zM849.47 522.60h12.25v12.25h-12.25zM849.47 537.23h12.25v12.25h-12.25zM849.47 551.86h12.25v12.25h-12.25zM849.47 566.49h12.25v12.25h-12.25zM849.47 581.12h12.25v12.25h-12.25zM849.47 595.75h12.25v12.25h-12.25zM849.47 610.38h12.25v12.25h-12.25zM864.12 522.60h12.25v12.25h-12.25zM864.12 537.23h12.25v12.25h-12.25zM864.12 551.86h12.25v12.25h-12.25zM864.12 566.49h12.25v12.25h-12.25zM864.12 581.12h12.25v12.25h-12.25zM864.12 595.75h12.25v12.25h-12.25zM864.12 610.38h12.25v12.25h-12.25zM878.77 522.60h12.25v12.25h-12.25zM878.77 537.23h12.25v12.25h-12.25zM878.77 551.86h12.25v12.25h-12.25zM878.77 566.49h12.25v12.25h-12.25zM878.77 581.12h12.25v12.25h-12.25zM878.77 595.75h12.25v12.25h-12.25zM878.77 610.38h12.25v12.25h-12.25zM893.43 522.60h12.25v12.25h-12.25zM893.43 537.23h12.25v12.25h-12.25zM893.43 551.86h12.25v12.25h-12.25zM893.43 566.49h12.25v12.25h-12.25zM893.43 581.12h12.25v12.25h-12.25zM893.43 595.75h12.25v12.25h-12.25zM893.43 610.38h12.25v12.25h-12.25zM908.08 522.60h12.25v12.25h-12.25zM908.08 537.23h12.25v12.25h-12.25zM908.08 551.86h12.25v12.25h-12.25zM908.08 566.49h12.25v12.25h-12.25zM908.08 581.12h12.25v12.25h-12.25zM908.08 595.75h12.25v12.25h-12.25zM908.08 610.38h12.25v12.25h-12.25zM922.74 522.60h12.25v12.25h-12.25zM922.74 537.23h12.25v12.25h-12.25zM922.74 551.86h12.25v12.25h-12.25zM922.74 566.49h12.25v12.25h-12.25zM922.74 581.12h12.25v12.25h-12.25zM922.74 595.75h12.25v12.25h-12.25zM922.74 610.38h12.25v12.25h-12.25zM937.39 522.60h12.25v12.25h-12.25zM937.39 537.23h12.25v12.25h-12.25zM937.39 551.86h12.25v12.25h-12.25zM937.39 566.49h12.25v12.25h-12.25zM937.39 581.12h12.25v12.25h-12.25zM937.39 595.75h12.25v12.25h-12.25zM937.39 610.38h12.25v12.25h-12.25zM952.04 522.60h12.25v12.25h-12.25zM952.04 537.23h12.25v12.25h-12.25zM952.04 551.86h12.25v12.25h-12.25zM952.04 566.49h12.25v12.25h-12.25zM952.04 581.12h12.25v12.25h-12.25zM952.04 595.75h12.25v12.25h-12.25zM952.04 610.38h12.25v12.25h-12.25zM966.70 522.60h12.25v12.25h-12.25zM966.70 537.23h12.25v12.25h-12.25zM966.70 551.86h12.25v12.25h-12.25zM966.70 566.49h12.25v12.25h-12.25zM966.70 581.12h12.25v12.25h-12.25zM966.70 595.75h12.25v12.25h-12.25zM966.70 610.38h12.25v12.25h-12.25zM981.35 522.60h12.25v12.25h-12.25zM981.35 537.23h12.25v12.25h-12.25zM981.35 551.86h12.25v12.25h-12.25zM981.35 566.49h12.25v12.25h-12.25zM981.35 581.12h12.25v12.25h-12.25zM981.35 595.75h12.25v12.25h-12.25zM981.35 610.38h12.25v12.25h-12.25zM996.01 522.60h12.25v12.25h-12.25zM996.01 537.23h12.25v12.25h-12.25zM996.01 551.86h12.25v12.25h-12.25zM996.01 566.49h12.25v12.25h-12.25zM996.01 581.12h12.25v12.25h-12.25zM996.01 595.75h12.25v12.25h-12.25zM996.01 610.38h12.25v12.25h-12.25zM1010.66 522.60h12.25v12.25h-12.25zM1010.66 537.23h12.25v12.25h-12.25zM1010.66 551.86h12.25v12.25h-12.25zM1010.66 566.49h12.25v12.25h-12.25zM1010.66 581.12h12.25v12.25h-12.25zM1010.66 595.75h12.25v12.25h-12.25zM1010.66 610.38h12.25v12.25h-12.25zM1025.31 522.60h12.25v12.25h-12.25zM1025.31 537.23h12.25v12.25h-12.25zM1025.31 551.86h12.25v12.25h-12.25zM1025.31 566.49h12.25v12.25h-12.25zM1025.31 581.12h12.25v12.25h-12.25zM1025.31 595.75h12.25v12.25h-12.25zM1025.31 610.38h12.25v12.25h-12.25zM1039.97 522.60h12.25v12.25h-12.25zM1039.97 537.23h12.25v12.25h-12.25zM1039.97 551.86h12.25v12.25h-12.25zM1039.97 566.49h12.25v12.25h-12.25zM1039.97 581.12h12.25v12.25h-12.25zM1039.97 595.75h12.25v12.25h-12.25zM1039.97 610.38h12.25v12.25h-12.25zM1054.62 522.60h12.25v12.25h-12.25zM1054.62 537.23h12.25v12.25h-12.25zM1054.62 551.86h12.25v12.25h-12.25zM1054.62 566.49h12.25v12.25h-12.25zM1054.62 581.12h12.25v12.25h-12.25zM1054.62 595.75h12.25v12.25h-12.25zM1054.62 610.38h12.25v12.25h-12.25zM1069.28 522.60h12.25v12.25h-12.25zM1069.28 537.23h12.25v12.25h-12.25zM1069.28 551.86h12.25v12.25h-12.25zM1069.28 566.49h12.25v12.25h-12.25zM1069.28 581.12h12.25v12.25h-12.25zM1069.28 595.75h12.25v12.25h-12.25zM1069.28 610.38h12.25v12.25h-12.25zM1083.93 522.60h12.25v12.25h-12.25zM1083.93 537.23h12.25v12.25h-12.25zM1083.93 551.86h12.25v12.25h-12.25zM1083.93 566.49h12.25v12.25h-12.25zM1083.93 581.12h12.25v12.25h-12.25zM1083.93 595.75h12.25v12.25h-12.25zM1083.93 610.38h12.25v12.25h-12.25zM1098.58 522.60h12.25v12.25h-12.25zM1098.58 537.23h12.25v12.25h-12.25zM1098.58 551.86h12.25v12.25h-12.25zM1098.58 566.49h12.25v12.25h-12.25zM1098.58 581.12h12.25v12.25h-12.25zM1098.58 595.75h12.25v12.25h-12.25zM1098.58 610.38h12.25v12.25h-12.25zM1113.24 522.60h12.25v12.25h-12.25zM1113.24 537.23h12.25v12.25h-12.25zM1113.24 551.86h12.25v12.25h-12.25zM1113.24 566.49h12.25v12.25h-12.25zM1113.24 581.12h12.25v12.25h-12.25zM1113.24 595.75h12.25v12.25h-12.25zM1113.24 610.38h12.25v12.25h-12.25zM1127.89 522.60h12.25v12.25h-12.25zM1127.89 537.23h12.25v12.25h-12.25zM1127.89 551.86h12.25v12.25h-12.25zM1127.89 566.49h12.25v12.25h-12.25zM1127.89 581.12h12.25v12.25h-12.25zM1127.89 595.75h12.25v12.25h-12.25zM1127.89 610.38h12.25v12.25h-12.25zM1142.55 522.60h12.25v12.25h-12.25zM1142.55 537.23h12.25v12.25h-12.25zM1142.55 551.86h12.25v12.25h-12.25zM1142.55 566.49h12.25v12.25h-12.25zM1142.55 581.12h12.25v12.25h-12.25zM1142.55 595.75h12.25v12.25h-12.25zM1142.55 610.38h12.25v12.25h-12.25zM1157.20 522.60h12.25v12.25h-12.25zM1157.20 537.23h12.25v12.25h-12.25zM1157.20 551.86h12.25v12.25h-12.25zM1157.20 566.49h12.25v12.25h-12.25zM1157.20 581.12h12.25v12.25h-12.25zM1157.20 595.75h12.25v12.25h-12.25zM1157.20 610.38h12.25v12.25h-12.25zM1171.85 522.60h12.25v12.25h-12.25zM1171.85 537.23h12.25v12.25h-12.25zM1171.85 551.86h12.25v12.25h-12.25zM1171.85 566.49h12.25v12.25h-12.25zM1171.85 581.12h12.25v12.25h-12.25zM1171.85 595.75h12.25v12.25h-12.25zM1171.85 610.38h12.25v12.25h-12.25zM1186.51 522.60h12.25v12.25h-12.25z"/>
<rect x="1186.51" y="537.23" width="12.25" height="12.25" fill="#d3e386"/>
<rect x="1186.51" y="551.86" width="12.25" height="12.25" fill="#d3e386"/>
<rect x="1186.51" y="566.49" width="12.25" height="12.25" fill="#215f26"/>
<rect x="1103" y="646.8" width="13.6" height="13.6" fill="#ebebeb"/>
<rect x="1121.4" y="646.8" width="13.6" height="13.6" fill="#d3e386"/>
<rect x="1139.7" y="646.8" width="13.6" height="13.6" fill="#85c167"/>
<rect x="1158" y="646.8" width="13.6" height="13.6" fill="#439b45"/>
<rect x="1176.4" y="646.8" width="13.6" height="13.6" fill="#215f26"/>
</svg>
<svg class="i" style="left:388.8px;top:111.8px;width:17px;height:17px;fill:#24292e" viewBox="0 0 16 16"><path fill-rule="evenodd" d="M1.5 8a6.5 6.5 0 1113 0 6.5 6.5 0 01-13 0zM8 0a8 8 0 100 16A8 8 0 008 0zM5 8a1 1 0 100-2 1 1 0 000 2zm7-1a1 1 0 11-2 0 1 1 0 012 0zM5.32 9.636a.75.75 0 011.038.175l.007.009c.103.118.22.222.35.31.264.178.683.37 1.285.37.602 0 1.02-.192 1.285-.371.13-.088.247-.192.35-.31l.007-.008a.75.75 0 111.222.87l-.614-.431c.614.43.614.431.613.431v.001l-.001.002-.002.003-.005.007-.014.019a1.984 1.984 0 01-.184.213c-.16.166-.338.316-.53.445-.63.418-1.37.638-2.127.629-.946 0-1.652-.308-2.126-.63a3.32 3.32 0 01-.715-.657l-.014-.02-.005-.006-.002-.003v-.002h-.001l.613-.432-.614.43a.75.75 0 01.183-1.044h.001z"/></svg>
<svg class="i" style="left:1251.45px;top:114.92px;width:17px;height:17px;fill:#586069" viewBox="0 0 16 16"><path fill-rule="evenodd" d="M11.013 1.427a1.75 1.75 0 012.474 0l1.086 1.086a1.75 1.75 0 010 2.474l-8.61 8.61c-.21.21-.47.364-.756.445l-3.251.93a.75.75 0 01-.927-.928l.929-3.25a1.75 1.75 0 01.445-.758l8.61-8.61zm1.414 1.06a.25.25 0 00-.354 0L10.811 3.75l1.439 1.44 1.263-1.263a.25.25 0 000-.354l-1.086-1.086zM11.189 6.25L9.75 4.81l-6.286 6.287a.25.25 0 00-.064.108l-.558 1.953 1.953-.558a.249.249 0 00.108-.064l6.286-6.286z"/></svg>
<svg class="i" style="left:368.25px;top:452.37px;width:17px;height:17px;fill:#24292e" viewBox="0 0 16 16"><path fill-rule="evenodd" d="M7.775 3.275a.75.75 0 001.06 1.06l1.25-1.25a2 2 0 112.83 2.83l-2.5 2.5a2 2 0 01-2.83 0 .75.75 0 00-1.06 1.06 3.5 3.5 0 004.95 0l2.5-2.5a3.5 3.5 0 00-4.95-4.95l-1.25 1.25zm-4.69 9.64a2 2 0 010-2.83l2.5-2.5a2 2 0 012.83 0 .75.75 0 001.06-1.06 3.5 3.5 0 00-4.95 0l-2.5 2.5a3.5 3.5 0 004.95 4.95l1.25-1.25a.75.75 0 00-1.06-1.06l-1.25 1.25a2 2 0 01-2.83 0z"/></svg>
<span class="t" style="left:412.37px;top:114.02px;font-size:12.75px;line-height:16px;font-family:'Liberation Mono', monospace;transform:scaleX(0.9844);-webkit-text-stroke:0.25px">hatappi</span><span class="t" style="left:466.6px;top:114.02px;font-size:12.75px;line-height:16px;font-family:'Liberation Mono', monospace;color:#444d56;transform:scaleX(1.2800);-webkit-text-stroke:0.25px">/</span><span class="t" style="left:475.97px;top:114.02px;font-size:12.75px;line-height:16px;font-family:'Liberation Mono', monospace;transform:scaleX(1.0304);-webkit-text-stroke:0.25px">README</span><span class="t" style="left:520.97px;top:114.02px;font-size:12.75px;line-height:16px;font-family:'Liberation Mono', monospace;color:#6a737d;transform:scaleX(0.9945);-webkit-text-stroke:0.25px">.md</span>
<span class="t" style="left:1140.67px;top:119.02px;font-size:12.75px;line-height:16px;color:#1a66d6;transform:scaleX(1.0498);-webkit-text-stroke:0.55px">Send feedback</span>
<h1 class="t" style="left:388.23px;top:149.02px;font-size:28.2px;line-height:34px;font-weight:bold;transform:scaleX(1.0068)">hatappi</h1>
<span class="t" style="left:414.46px;top:227.02px;font-size:20.4px;line-height:25px;color:#2d7ceb;transform:scaleX(1.0887);-webkit-text-stroke:0.8px">Most Used Languages</span>
<span class="t" style="left:429.9px;top:291.02px;font-size:12.4px;line-height:15px;color:#333;transform:scaleX(1.0079);-webkit-text-stroke:0.25px">Go 42.90%</span>
<span class="t" style="left:429.99px;top:317.02px;font-size:12.4px;line-height:15px;color:#333;transform:scaleX(1.0080);-webkit-text-stroke:0.25px">HTML 9.90%</span>
<span class="t" style="left:429.96px;top:343.02px;font-size:12.4px;line-height:15px;color:#333;transform:scaleX(0.9906);-webkit-text-stroke:0.25px">Scala 4.31%</span>
<span class="t" style="left:583.98px;top:291.02px;font-size:12.4px;line-height:15px;color:#333;transform:scaleX(1.0202);-webkit-text-stroke:0.25px">Ruby 37.49%</span>
<span class="t" style="left:584.85px;top:317.02px;font-size:12.4px;line-height:15px;color:#333;transform:scaleX(1.0061);-webkit-text-stroke:0.25px">JavaScript 5.40%</span>
<span class="t" style="left:389.77px;top:403.02px;font-size:14.9px;line-height:18px;transform:scaleX(0.9862);-webkit-text-stroke:0.25px">These cards are powered by</span>
<a class="t" style="left:579.93px;top:403.02px;font-size:14.9px;line-height:18px;color:#1a66d6;transform:scaleX(1.0371);-webkit-text-stroke:0.25px">https://github.com/anuraghazra/github-readme-stats</a>
<h2 class="t" style="left:388.86px;top:447.02px;font-size:23.2px;line-height:28px;font-weight:bold;transform:scaleX(0.8808)">Count of Pomodoro</h2>
<span class="t" style="left:1082.92px;top:642.02px;font-size:19px;line-height:23px;color:#000;transform:scaleX(1.1368);-webkit-text-stroke:0.4px">0</span>
<span class="t" style="left:1199.71px;top:641.02px;font-size:19px;line-height:23px;color:#000;-webkit-text-stroke:0.5px">+</span>
<span class="t" style="left:417.1px;top:498.02px;font-size:18.8px;line-height:23px;color:#000;transform:scaleX(1.0639);-webkit-text-stroke:0.4px">10</span>
<span class="t" style="left:472px;top:498.02px;font-size:18.8px;line-height:23px;color:#000;transform:scaleX(1.0239);-webkit-text-stroke:0.4px">11</span>
<span class="t" style="left:535.48px;top:498.02px;font-size:18.8px;line-height:23px;color:#000;transform:scaleX(1.0804);-webkit-text-stroke:0.4px">12</span>
<span class="t" style="left:614.48px;top:498.02px;font-size:18.8px;line-height:23px;color:#000;transform:scaleX(0.9978);-webkit-text-stroke:0.4px">1</span>
<span class="t" style="left:677.54px;top:498.02px;font-size:18.8px;line-height:23px;color:#000;transform:scaleX(1.2028);-webkit-text-stroke:0.4px">2</span>
<span class="t" style="left:740.92px;top:498.02px;font-size:18.8px;line-height:23px;color:#000;transform:scaleX(1.1640);-webkit-text-stroke:0.4px">3</span>
<span class="t" style="left:804.88px;top:498.02px;font-size:18.8px;line-height:23px;color:#000;transform:scaleX(1.0935);-webkit-text-stroke:0.4px">4</span>
<span class="t" style="left:868.42px;top:498.02px;font-size:18.8px;line-height:23px;color:#000;transform:scaleX(1.1640);-webkit-text-stroke:0.4px">5</span>
<span class="t" style="left:915.64px;top:498.02px;font-size:18.8px;line-height:23px;color:#000;transform:scaleX(1.2028);-webkit-text-stroke:0.4px">6</span>
<span class="t" style="left:994.84px;top:498.02px;font-size:18.8px;line-height:23px;color:#000;transform:scaleX(1.2028);-webkit-text-stroke:0.4px">7</span>
<span class="t" style="left:1042.42px;top:498.02px;font-size:18.8px;line-height:23px;color:#000;transform:scaleX(1.1640);-webkit-text-stroke:0.4px">8</span>
<span class="t" style="left:1106.14px;top:498.02px;font-size:18.8px;line-height:23px;color:#000;transform:scaleX(1.2028);-webkit-text-stroke:0.4px">9</span>
<span class="t" style="left:1170.5px;top:498.02px;font-size:18.8px;line-height:23px;color:#000;transform:scaleX(1.0639);-webkit-text-stroke:0.4px">10</span>
<span class="t" style="left:443.85px;top:639.02px;font-size:19.8px;line-height:24px;font-weight:bold;color:#111;transform:scaleX(1.0905)">pixela</span>
<svg class="i" id="logo" viewBox="0 0 1300 472.7">
<defs><clipPath id="lg"><ellipse cx="280" cy="243" rx="131" ry="144"/></clipPath></defs>
<g clip-path="url(#lg)">
<rect x="140" y="90" width="280" height="310" fill="#2c7430"/>
<path d="M140 90h175c10 40 5 120-15 175H140z" fill="#69b64f"/>
<path d="M310 90c60 20 100 80 105 175H330c15-60 10-130-20-175z" fill="#236325"/>
<rect x="140" y="262" width="280" height="38" fill="#7cc15a"/>
<rect x="140" y="300" width="280" height="40" fill="#3f9a40"/>
<rect x="140" y="340" width="280" height="60" fill="#2c7a30"/>
<ellipse cx="188" cy="200" rx="36" ry="44" fill="#cfe57e"/>
<ellipse cx="263" cy="205" rx="46" ry="58" fill="#fff"/>
<circle cx="270" cy="190" r="14" fill="#111"/>
<rect x="155" y="262" width="45" height="40" fill="#6cb84f"/>
<rect x="200" y="262" width="45" height="40" fill="#1e5f23"/>
<rect x="245" y="262" width="45" height="40" fill="#4a9c40"/>
<rect x="155" y="302" width="45" height="40" fill="#3d9a3f"/>
<rect x="200" y="302" width="45" height="40" fill="#c5e27b"/>
<rect x="245" y="302" width="45" height="40" fill="#1e5f23"/>
<rect x="155" y="342" width="45" height="40" fill="#2c7a30"/>
<rect x="200" y="342" width="45" height="45" fill="#1e5f23"/>
<rect x="245" y="342" width="45" height="45" fill="#69b64f"/>
</g>
<rect x="112" y="264" width="42" height="38" fill="#c8e282"/>
<rect x="150" y="302" width="20" height="38" fill="#3d9a3f"/>
<rect x="624" y="100" width="80" height="82" fill="#fff"/>
<path d="M632 165C628 135 650 108 692 108C694 140 680 168 650 166Z" fill="#3f9a40"/>
</svg>
</main>
</div>
</body>
</html>
